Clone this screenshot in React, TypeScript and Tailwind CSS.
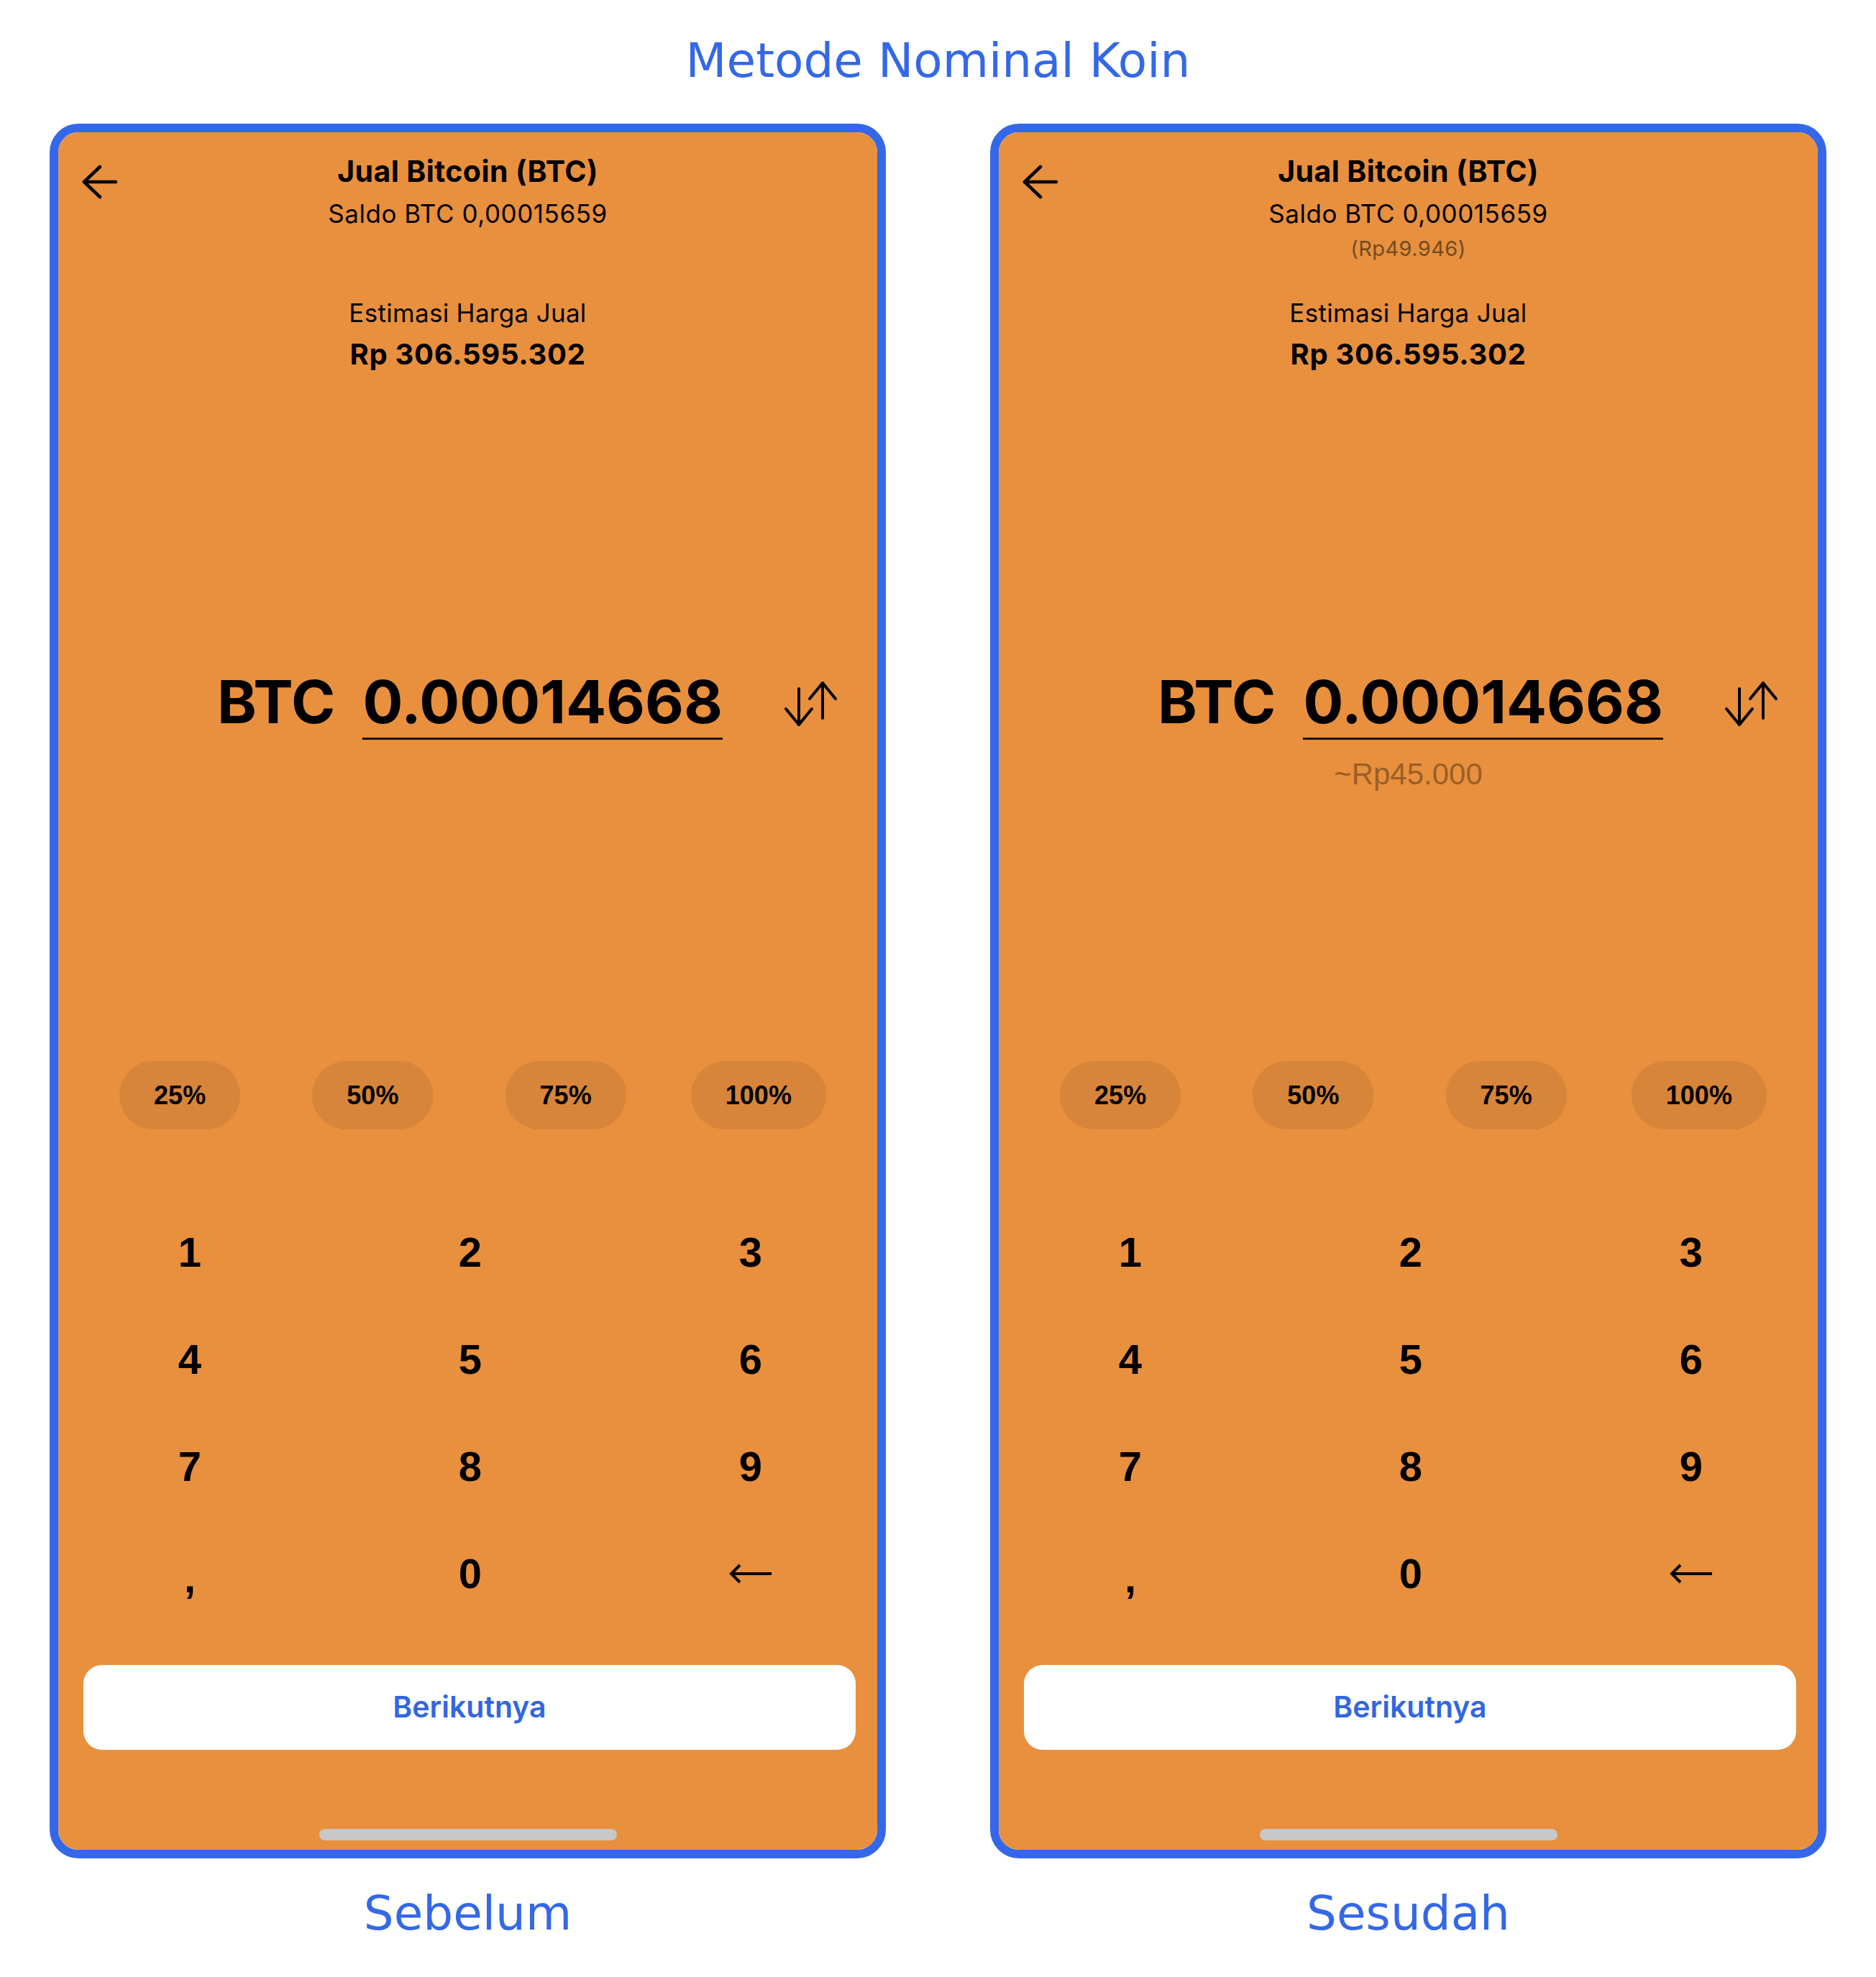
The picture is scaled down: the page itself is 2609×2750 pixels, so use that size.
const keys = ['1', '2', '3', '4', '5', '6', '7', '8', '9', ',', '0', 'back'];
const pills = ['25%', '50%', '75%', '100%'];

function BackArrow() {
  return (
    <svg width="50" height="48" viewBox="0 0 50 48" fill="none" stroke="#000" strokeWidth="4.5" strokeLinecap="round" strokeLinejoin="round">
      <path d="M3 24H47" />
      <path d="M25 3L3 24L25 45" />
    </svg>
  );
}

function SwapIcon() {
  return (
    <svg width="78" height="64" viewBox="0 0 78 64" fill="none" stroke="#000" strokeWidth="4" strokeLinecap="round" strokeLinejoin="round">
      {/* down arrow */}
      <path d="M22 11V61" />
      <path d="M4 39L22 61L40 39" />
      {/* up arrow */}
      <path d="M55 3V52" />
      <path d="M37 25L55 3L73 25" />
    </svg>
  );
}

function Backspace() {
  return (
    <svg width="62" height="30" viewBox="0 0 62 30" fill="none" stroke="#000" strokeWidth="4" strokeLinecap="butt" strokeLinejoin="miter">
      <path d="M4 15H60" />
      <path d="M16 3L4 15L16 27" />
    </svg>
  );
}

function Phone({ after }: { after?: boolean }) {
  return (
    <div className="w-[1163px] h-[2413px] border-[12px] border-[#3468e8] rounded-[40px] overflow-hidden">
      <div className="relative h-full bg-[#e8903e] flex flex-col items-center font-['Inter',sans-serif] text-black">
        {/* Back button */}
        <div className="absolute left-[33px] top-[45px]">
          <BackArrow />
        </div>

        {/* Header */}
        <div className="pt-[29px] text-[41px] leading-[50px] font-bold tracking-[0.4px]">Jual Bitcoin (BTC)</div>
        <div className="mt-[12px] text-[35px] leading-[44px] tracking-[0.55px]">Saldo BTC 0,00015659</div>
        <div className="mt-[10px] h-[34px] text-[29px] leading-[34px] text-[#744b1f] tracking-[0.4px]">
          {after ? '(Rp49.946)' : ''}
        </div>
        <div className="mt-[50px] text-[35px] leading-[44px] tracking-[0.3px]">Estimasi Harga Jual</div>
        <div className="mt-[13px] text-[40px] leading-[46px] font-bold tracking-[0.7px]">Rp 306.595.302</div>

        {/* Amount */}
        <div className="relative w-full mt-[410px] flex justify-center gap-[38px] pl-[6px] text-[83px] leading-[100px] font-bold">
          <span>BTC</span>
          <span className="border-b-[3px] border-[#1a0d00]">0.00014668</span>
          <div className="absolute right-[53px] top-[21px]">
            <SwapIcon />
          </div>
        </div>
        <div className="mt-[23px] h-[50px] text-[42px] leading-[50px] font-['Liberation_Sans',sans-serif] text-[#9a5f26]">
          {after ? '~Rp45.000' : ''}
        </div>

        {/* Percent pills */}
        <div className="w-full mt-[374px] grid grid-cols-4 pl-[35px] pr-[31px]">
          {pills.map((p) => (
            <div key={p} className="flex justify-center">
              <div className="h-[95px] px-[48px] rounded-full bg-[#d7853a] flex items-center text-[36px] font-bold font-['Liberation_Sans',sans-serif]">
                {p}
              </div>
            </div>
          ))}
        </div>

        {/* Keypad */}
        <div className="mt-[96px] pl-[7px] grid grid-cols-[repeat(3,200px)] gap-x-[190px] font-['Liberation_Sans',sans-serif] font-bold text-[58px] leading-none">
          {keys.map((k) => (
            <div key={k} className="h-[149px] flex items-center justify-center">
              {k === 'back' ? <Backspace /> : k === ',' ? <span className="mt-[12px]">,</span> : k}
            </div>
          ))}
        </div>

        {/* Next button */}
        <div className="w-full pl-[35px] pr-[30px] mt-[53px]">
          <div className="h-[118px] rounded-[26px] bg-white flex items-center justify-center text-[41px] font-semibold text-[#3366e0]">
            Berikutnya
          </div>
        </div>

        {/* Home indicator */}
        <div className="mt-[110px] w-[414px] h-[16px] rounded-full bg-[#c8c8c8]" />
      </div>
    </div>
  );
}

export default function App() {
  return (
    <div className="w-[2609px] h-[2750px] bg-white flex flex-col items-center font-['DejaVu_Sans',sans-serif] text-[#3468e8]">
      <div className="pt-[45px] text-[66px] leading-[80px]">Metode Nominal Koin</div>
      <div className="mt-[47px] flex gap-[145px]">
        <div className="flex flex-col items-center">
          <Phone />
          <div className="mt-[37px] text-[66px] leading-[80px]">Sebelum</div>
        </div>
        <div className="flex flex-col items-center">
          <Phone after />
          <div className="mt-[37px] text-[66px] leading-[80px]">Sesudah</div>
        </div>
      </div>
    </div>
  );
}
